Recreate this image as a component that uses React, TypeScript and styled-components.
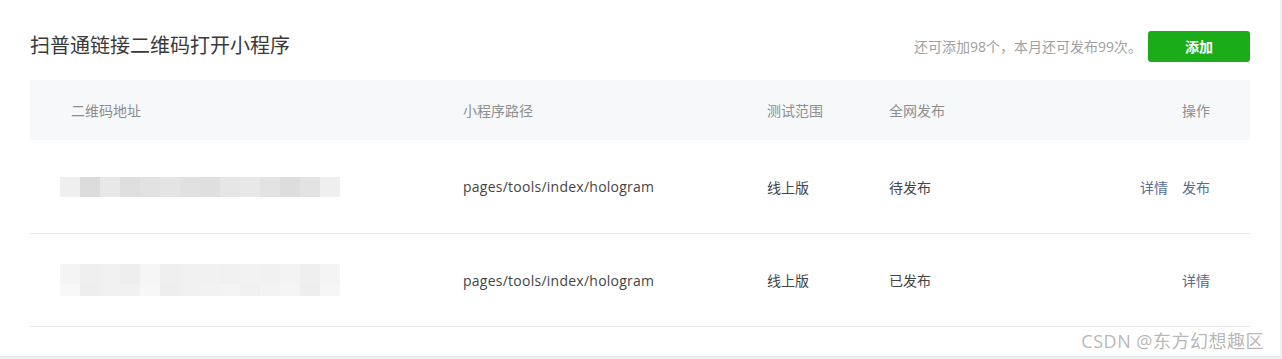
import * as React from "react";
import styled, { createGlobalStyle } from "styled-components";

const GlobalStyle = createGlobalStyle`
  html, body {
    margin: 0;
    padding: 0;
    background: #f0f1f2;
  }
  body {
    font-family: "Open Sans", "Noto Sans CJK SC", sans-serif;
    color: #353535;
  }
`;

interface IRow {
  path: string;
  range: string;
  status: string;
  actions: string[];
  shades: string[][];
}

const rows: IRow[] = [
  {
    path: "pages/tools/index/hologram",
    range: "线上版",
    status: "待发布",
    actions: ["详情", "发布"],
    shades: [
      ["#efefef", "#dcdcdc", "#e8e8e8", "#dedede", "#e2e2e2", "#e4e4e4", "#e1e1e1", "#dfdfdf", "#e6e6e6", "#e8e8e8", "#e3e3e3", "#dddddd", "#e3e3e3", "#efefef"],
    ],
  },
  {
    path: "pages/tools/index/hologram",
    range: "线上版",
    status: "已发布",
    actions: ["详情"],
    shades: [
      ["#f4f4f4", "#efefef", "#f0f0f0", "#eeeeee", "#f6f6f6", "#efefef", "#f0f0f0", "#f1f1f1", "#f0f0f0", "#f2f2f2", "#f1f1f1", "#f3f3f3", "#efefef", "#f4f4f4"],
      ["#f8f8f8", "#eeeeee", "#f0f0f0", "#f1f1f1", "#f7f7f7", "#eeeeee", "#f0f0f0", "#f2f2f2", "#f4f4f4", "#f0f0f0", "#f3f3f3", "#f5f5f5", "#eeeeee", "#f6f6f6"],
    ],
  },
];

const App: React.FunctionComponent = () => {
  return (
    <>
      <GlobalStyle />
      <Card>
        <TitleBar>
          <Title>扫普通链接二维码打开小程序</Title>
          <Tools>
            <Hint>还可添加98个，本月还可发布99次。</Hint>
            <AddButton type="button">添加</AddButton>
          </Tools>
        </TitleBar>
        <Table>
          <HeadRow>
            <HeadCell $first>二维码地址</HeadCell>
            <HeadCell>小程序路径</HeadCell>
            <HeadCell>测试范围</HeadCell>
            <HeadCell>全网发布</HeadCell>
            <HeadCell $right>操作</HeadCell>
          </HeadRow>
          {rows.map((row, idx) => (
            <BodyRow key={idx} $first={idx === 0}>
              <Cell>
                <Blur>
                  {row.shades.map((line, li) => (
                    <BlurLine key={li}>
                      {line.map((shade, si) => (
                        <Pixel key={si} $shade={shade} />
                      ))}
                    </BlurLine>
                  ))}
                </Blur>
              </Cell>
              <Cell>
                <PathText>{row.path}</PathText>
              </Cell>
              <Cell>{row.range}</Cell>
              <Cell>{row.status}</Cell>
              <Cell $right>
                <Actions>
                  {row.actions.map((a) => (
                    <ActionLink key={a} href="#">
                      {a}
                    </ActionLink>
                  ))}
                </Actions>
              </Cell>
            </BodyRow>
          ))}
        </Table>
        <Watermark>CSDN @东方幻想趣区</Watermark>
      </Card>
    </>
  );
};

const Card = styled.div`
  position: relative;
  width: 1280px;
  box-sizing: border-box;
  padding: 30px 30px 29px;
  background: #fff;
  border-bottom-left-radius: 3px;
  border-bottom: 1px solid #e6e6e6;
`;

const TitleBar = styled.div`
  display: flex;
  align-items: center;
  justify-content: space-between;
  height: 32px;
  margin-bottom: 18px;
`;

const Title = styled.h2`
  margin: 0;
  font-size: 20px;
  font-weight: 400;
  color: #3a3a3a;
  line-height: 32px;
`;

const Tools = styled.div`
  display: flex;
  align-items: center;
  gap: 6px;
`;

const Hint = styled.span`
  font-size: 14px;
  color: #a0a0a0;
`;

const AddButton = styled.button`
  width: 102px;
  height: 31px;
  border: 0;
  border-radius: 3px;
  background: #1aad19;
  color: #fff;
  font-family: inherit;
  font-size: 14px;
  font-weight: 700;
  cursor: pointer;
`;

const Table = styled.div`
  display: flex;
  flex-direction: column;
`;

const columns = "403px 304px 122px 1fr 200px";

const HeadRow = styled.div`
  display: grid;
  grid-template-columns: ${columns};
  align-items: center;
  height: 60px;
  background: #f6f8f9;
`;

const HeadCell = styled.div<{ $first?: boolean; $right?: boolean }>`
  padding: 0 ${(p) => (p.$right ? "40px" : "30px")} 0 ${(p) => (p.$first ? "41px" : "30px")};
  text-align: ${(p) => (p.$right ? "right" : "left")};
  font-size: 14px;
  color: #8e8e8e;
`;

const BodyRow = styled.div<{ $first?: boolean }>`
  display: grid;
  grid-template-columns: ${columns};
  align-items: center;
  height: ${(p) => (p.$first ? "93px" : "92px")};
  border-bottom: 1px solid #e7e7e7;
`;

const Cell = styled.div<{ $right?: boolean }>`
  padding: 0 ${(p) => (p.$right ? "40px" : "30px")} 0 30px;
  text-align: ${(p) => (p.$right ? "right" : "left")};
  font-size: 14px;
  color: #444;
`;

const PathText = styled.span`
  letter-spacing: 0.25px;
`;

const Blur = styled.div`
  display: flex;
  flex-direction: column;
  width: 280px;
  filter: blur(0.6px);
`;

const BlurLine = styled.div`
  display: flex;
  height: 20px;
  & + & {
    height: 12px;
  }
`;

const Pixel = styled.div<{ $shade: string }>`
  flex: 1;
  background: ${(p) => p.$shade};
`;

const Actions = styled.div`
  display: flex;
  justify-content: flex-end;
  gap: 14px;
`;

const ActionLink = styled.a`
  color: #576b95;
  text-decoration: none;
  font-size: 14px;
`;

const Watermark = styled.div`
  position: absolute;
  right: 16px;
  bottom: 3px;
  font-size: 18px;
  color: rgba(120, 120, 120, 0.55);
  letter-spacing: 0.5px;
  pointer-events: none;
`;

export default App;
